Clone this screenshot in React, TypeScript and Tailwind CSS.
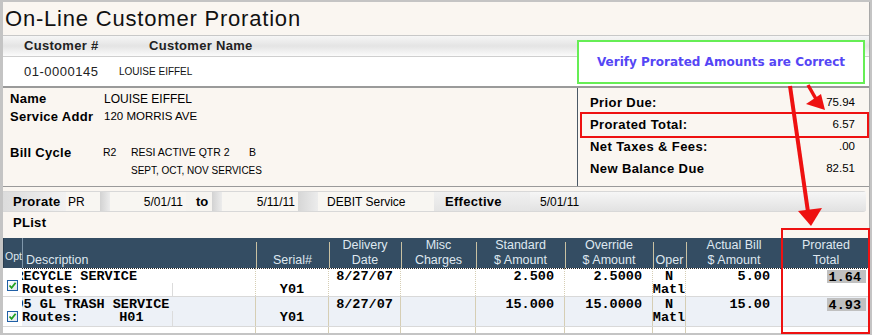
import React from "react";

const mono = "font-['Liberation_Mono','DejaVu_Sans_Mono',monospace] font-bold text-[13.5px] leading-[13px]";

function Check() {
  return (
    <div className="w-[11px] h-[11px] border border-[#1f5fa6] bg-gradient-to-br from-[#ffffff] to-[#dfe6ee] flex items-center justify-center">
      <svg width="9" height="9" viewBox="0 0 9 9">
        <path d="M1.5 4.5 L3.6 6.8 L7.6 1.8" fill="none" stroke="#21a121" strokeWidth="1.8" />
      </svg>
    </div>
  );
}

function HeadCell({ l1, l2, border = true, align = "center" }: { l1?: string; l2: string; border?: boolean; align?: string }) {
  return (
    <div className={`relative h-[30px] flex flex-col justify-end ${align === "left" ? "items-start pl-[3px]" : "items-center"} leading-[15px] text-[12.5px] text-[#dfe8f0]`}>
      {border && <div className="absolute left-0 top-[4px] bottom-0 w-px bg-[#c9c1a2]" />}
      {l1 && <div>{l1}</div>}
      <div>{l2}</div>
    </div>
  );
}

const cols = "grid grid-cols-[19px_233px_73px_72px_75px_89px_88px_33px_96px_88px]";

function BodyRow({
  first,
  desc1,
  route,
  std,
  ovr,
  act,
  pror,
  bg,
  chkTop,
  h,
  topBorder,
}: {
  first: string;
  desc1: string;
  route: string;
  std: string;
  ovr: string;
  act: string;
  pror: string;
  bg: string;
  chkTop: string;
  h: string;
  topBorder?: boolean;
}) {
  const tb = topBorder ? "border-t border-dotted border-t-[#222]" : "";
  const cell = `${bg} ${tb} border-l border-l-[#d6ceb4] pt-[1px]`;
  return (
    <div className={`${cols} ${h} border-b border-[#d9d9d9]`}>
      <div className={`bg-white flex justify-start pl-[4px] ${chkTop}`}>
        <Check />
      </div>
      <div className={`${bg} ${tb} pt-[1px] flex`}>
        <div className={`${mono} overflow-hidden w-full relative`}>
          <div className="whitespace-pre -ml-[6.5px]">{first + desc1}</div>
          <div className="whitespace-pre">{route}</div>
          <div className="absolute left-[150px] top-[13px] bottom-0 w-px bg-[#dcdcdc]" />
        </div>
      </div>
      <div className={`${cell} ${mono} flex flex-col items-center`}>
        <div>&nbsp;</div>
        <div>Y01</div>
      </div>
      <div className={`${cell} ${mono} flex justify-center`}>8/27/07</div>
      <div className={cell} />
      <div className={`${cell} ${mono} text-right pr-[10px]`}>{std}</div>
      <div className={`${cell} ${mono} text-right pr-[10px]`}>{ovr}</div>
      <div className={`${cell} ${mono} flex flex-col items-center`}>
        <div>N</div>
        <div>Matl</div>
      </div>
      <div className={`${cell} ${mono} text-right pr-[11px]`}>{act}</div>
      <div className={`${bg} ${tb} border-l border-l-[#d6ceb4] flex justify-end pr-[3px]`}>
        <div className={`${mono} bg-[#c0c0c0] h-[13px] w-[39px] text-right pr-[5px] mt-[1px] pt-[0.5px]`}>{pror}</div>
      </div>
    </div>
  );
}

export default function App() {
  return (
    <div className="relative w-[872px] h-[335px] overflow-hidden bg-[#c4c4c4] pt-[2px] pl-[3px] font-['Liberation_Sans',Arial,sans-serif] text-black">
      <div className="w-[867px] h-[331px] bg-[#faf6f1] border-r border-[#a8a8a8] flex flex-col">
        {/* Title */}
        <div className="h-[34px] shrink-0 border-b border-[#c8c8c8] pl-[2px] flex items-center">
          <span className="text-[22px] tracking-[0.8px] leading-none text-[#111] pt-[1px]">On-Line Customer Proration</span>
        </div>
        {/* Customer header */}
        <div className="h-[21px] shrink-0 border-b border-[#cfcfcf] bg-gradient-to-b from-[#f6f6f6] via-[#e4e4e4] to-[#fbfbfb] flex items-center text-[13px] font-bold tracking-[0.3px] text-[#222]">
          <span className="ml-[21px] w-[125px]">Customer #</span>
          <span>Customer Name</span>
        </div>
        {/* Customer data */}
        <div className="h-[31px] shrink-0 border-b-2 border-[#9a9a9a] bg-white flex items-center">
          <span className="ml-[21px] w-[95px] text-[13px] tracking-[0.5px] text-[#222]">01-0000145</span>
          <span className="text-[10px] text-[#111]">LOUISE EIFFEL</span>
        </div>
        {/* Info section */}
        <div className="h-[99px] shrink-0 border-b border-[#9a9a9a] flex">
          <div className="w-[574px] pl-[7px] pt-[2px]">
            <div className="flex h-[18px] items-center">
              <span className="w-[94px] text-[13px] font-bold tracking-[0.3px]">Name</span>
              <span className="text-[12px]">LOUISE EIFFEL</span>
            </div>
            <div className="flex h-[18px] items-center">
              <span className="w-[94px] text-[13px] font-bold tracking-[0.3px]">Service Addr</span>
              <span className="text-[11.5px]">120 MORRIS AVE</span>
            </div>
            <div className="h-[18px]" />
            <div className="flex h-[18px] items-center">
              <span className="w-[93px] text-[13px] font-bold tracking-[0.3px]">Bill Cycle</span>
              <span className="text-[10.5px] w-[28px] shrink-0">R2</span>
              <span className="text-[10.5px] w-[118px] shrink-0">RESI ACTIVE QTR 2</span>
              <span className="text-[10.5px]">B</span>
            </div>
            <div className="flex h-[16px] items-center pl-[121px]">
              <span className="text-[10px]">SEPT, OCT, NOV SERVICES</span>
            </div>
          </div>
          <div className="flex-1 border-l border-[#4a5866] pl-[12px] pr-[14px] pt-[4px]">
            {[
              ["Prior Due:", "75.94"],
              ["Prorated Total:", "6.57"],
              ["Net Taxes & Fees:", ".00"],
              ["New Balance Due", "82.51"],
            ].map(([k, v]) => (
              <div key={k} className="flex h-[22px] items-center justify-between">
                <span className="text-[13px] font-bold tracking-[0.4px]">{k}</span>
                <span className="text-[11.5px]">{v}</span>
              </div>
            ))}
          </div>
        </div>
        {/* Prorate section */}
        <div className="h-[51px] shrink-0 pt-[4px]">
          <div className="h-[21px] mr-[3px] flex items-center text-[12px] border-t border-b border-[#d8d8d8] rounded-r-[3px] bg-gradient-to-b from-[#f3f3f3] to-[#e6e6e6]">
            <div className="w-[63px] h-full flex items-center pl-[10px] text-[13px] font-bold tracking-[0.3px] bg-gradient-to-r from-[#dcdcdc] to-[#f2f2f2]">Prorate</div>
            <div className="w-[34px] h-full flex items-center pl-[2px] bg-[#f8f6f2]">PR</div>
            <div className="w-[10px] h-full bg-gradient-to-r from-[#d2d2d2] to-[#ececec]" />
            <div className="w-[76px] h-full flex items-center justify-end pr-[3px] bg-[#f8f6f2]">5/01/11</div>
            <div className="w-[26px] h-full flex items-center pl-[10px] text-[13px] font-bold bg-[#f6f4f0]">to</div>
            <div className="w-[10px] h-full bg-gradient-to-r from-[#d2d2d2] to-[#ececec]" />
            <div className="w-[76px] h-full flex items-center justify-end pr-[3px] bg-[#f8f6f2]">5/11/11</div>
            <div className="w-[20px] h-full bg-gradient-to-r from-[#d6d6d6] to-[#ececec]" />
            <div className="w-[116px] h-full flex items-center pl-[9px] bg-[#f8f6f2]">DEBIT Service</div>
            <div className="w-[96px] h-full flex items-center pl-[11px] text-[13px] font-bold tracking-[0.3px] bg-gradient-to-b from-[#f0f0f0] to-[#e4e4e4]">Effective</div>
            <div className="flex-1 h-full flex items-center pl-[10px] bg-gradient-to-b from-[#f6f6f6] to-[#e2e2e2]">5/01/11</div>
          </div>
          <div className="h-[20px] flex items-center pl-[10px] mt-[1px] text-[13px] font-bold tracking-[0.3px]">PList</div>
        </div>
        {/* Table header */}
        <div className={`${cols} h-[30px] shrink-0 bg-[#344d63] border-l border-[#2a3d4f]`}>
          <div className="h-[30px] flex items-end pb-[3px] pl-[1px] text-[10.5px] text-[#dfe8f0] border-r border-[#7f97ab]">Opt</div>
          <HeadCell l2="Description" border={false} align="left" />
          <HeadCell l2="Serial#" />
          <HeadCell l1="Delivery" l2="Date" />
          <HeadCell l1="Misc" l2="Charges" />
          <HeadCell l1="Standard" l2="$ Amount" />
          <HeadCell l1="Override" l2="$ Amount" />
          <HeadCell l2="Oper" />
          <HeadCell l1="Actual Bill" l2="$ Amount" />
          <HeadCell l1="Prorated" l2="Total" />
        </div>
        <BodyRow
          first="R"
          desc1="ECYCLE SERVICE"
          route="Routes:"
          std="2.500"
          ovr="2.5000"
          act="5.00"
          pror="1.64"
          bg="bg-white"
          chkTop="pt-[12px]"
          h="h-[29px]"
          topBorder
        />
        <BodyRow
          first="9"
          desc1="5 GL TRASH SERVICE"
          route="Routes:     H01"
          std="15.000"
          ovr="15.0000"
          act="15.00"
          pror="4.93"
          bg="bg-[#edf1f7]"
          chkTop="pt-[14px]"
          h="h-[30px]"
        />
        <div className={`${cols} h-[6px]`}>
          <div className="bg-white" />
          <div className="bg-white" />
          {Array.from({ length: 8 }).map((_, i) => (
            <div key={i} className="bg-white border-l border-[#d6ceb4]" />
          ))}
        </div>
      </div>

      {/* Callout: green box */}
      <div className="absolute left-[577px] top-[40px] w-[288px] h-[44px] border-2 border-[#66ee55] bg-white flex items-center justify-center">
        <span className="font-['DejaVu_Sans',Verdana,sans-serif] font-bold text-[12px] text-[#5546f5] pb-[1px]">
          Verify Prorated Amounts are Correct
        </span>
      </div>
      {/* Red boxes */}
      <div className="absolute left-[580px] top-[112px] w-[289px] h-[26px] border-2 border-[#ee1111]" />
      <div className="absolute left-[781px] top-[228px] w-[89px] h-[106px] border-2 border-[#ee1111]" />
      {/* Arrows */}
      <svg className="absolute left-0 top-0 pointer-events-none" width="872" height="335" viewBox="0 0 872 335">
        <line x1="808" y1="85" x2="816" y2="99" stroke="#ee1111" strokeWidth="3.5" />
        <polygon points="806,104 821,94 825,110" fill="#ee1111" />
        <line x1="790" y1="86" x2="808" y2="212" stroke="#ee1111" strokeWidth="4" />
        <polygon points="798,211 822,208 811,226" fill="#ee1111" />
      </svg>
    </div>
  );
}
